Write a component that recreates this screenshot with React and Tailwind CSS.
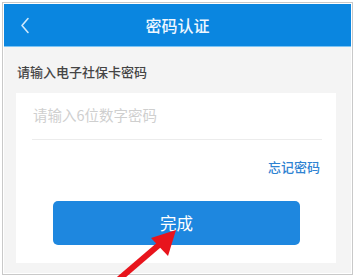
import React from 'react';

export default function App() {
  return (
    <div className="relative w-[357px] h-[277px] bg-white pl-[2px] pt-[2px] overflow-hidden" style={{ fontFamily: '"Noto Sans CJK SC", "Noto Sans", sans-serif' }}>
      <div className="w-[351px] h-[273px] border border-[#c9c9c9] p-px bg-white">
        <div className="flex flex-col h-full bg-[#f4f4f4]">
          {/* Header */}
          <div className="relative flex items-center justify-center h-[43px] shrink-0 bg-[#0a86e0] border-b border-[#7cc4f4]">
            <svg className="absolute left-[16px] top-[13px]" width="10" height="17" viewBox="0 0 10 17" fill="none">
              <path d="M8 1.5 L2 8.5 L8 15.5" stroke="#cfe8fb" strokeWidth="1.6" strokeLinecap="round" strokeLinejoin="round" />
            </svg>
            <span className="text-[16px] leading-none text-[#eef7ff] font-medium">密码认证</span>
          </div>

          {/* Label */}
          <div className="px-[13px] pt-[16px] pb-[12px] text-[13px] leading-[18px] text-[#444] font-medium">请输入电子社保卡密码</div>

          {/* Card */}
          <div className="ml-[12px] w-[320px] h-[170px] bg-white flex flex-col">
            <div className="mx-[16px] mr-[14px] h-[47px] flex items-center border-b border-[#ececec] pl-[1px] pb-[1px]">
              <span className="text-[14.5px] leading-none text-[#cfcfcf]">请输入6位数字密码</span>
            </div>
            <div className="flex justify-end pr-[16px] pt-[20px]">
              <span className="text-[13px] leading-none text-[#2f83d2] font-medium">忘记密码</span>
            </div>
            <div className="ml-[37px] mt-[28px] w-[247px] h-[44px] rounded-[5px] bg-[#1e87df] flex items-center justify-center">
              <span className="text-[16.5px] leading-none text-white">完成</span>
            </div>
          </div>
        </div>
      </div>

      {/* Red annotation arrow */}
      <svg className="absolute left-0 top-0 pointer-events-none" width="357" height="277" viewBox="0 0 357 277">
        <path d="M118 280 L160 244" stroke="#e8141c" strokeWidth="6" strokeLinecap="butt" />
        <polygon points="176,230 151,238 168,256" fill="#e8141c" />
      </svg>
    </div>
  );
}
